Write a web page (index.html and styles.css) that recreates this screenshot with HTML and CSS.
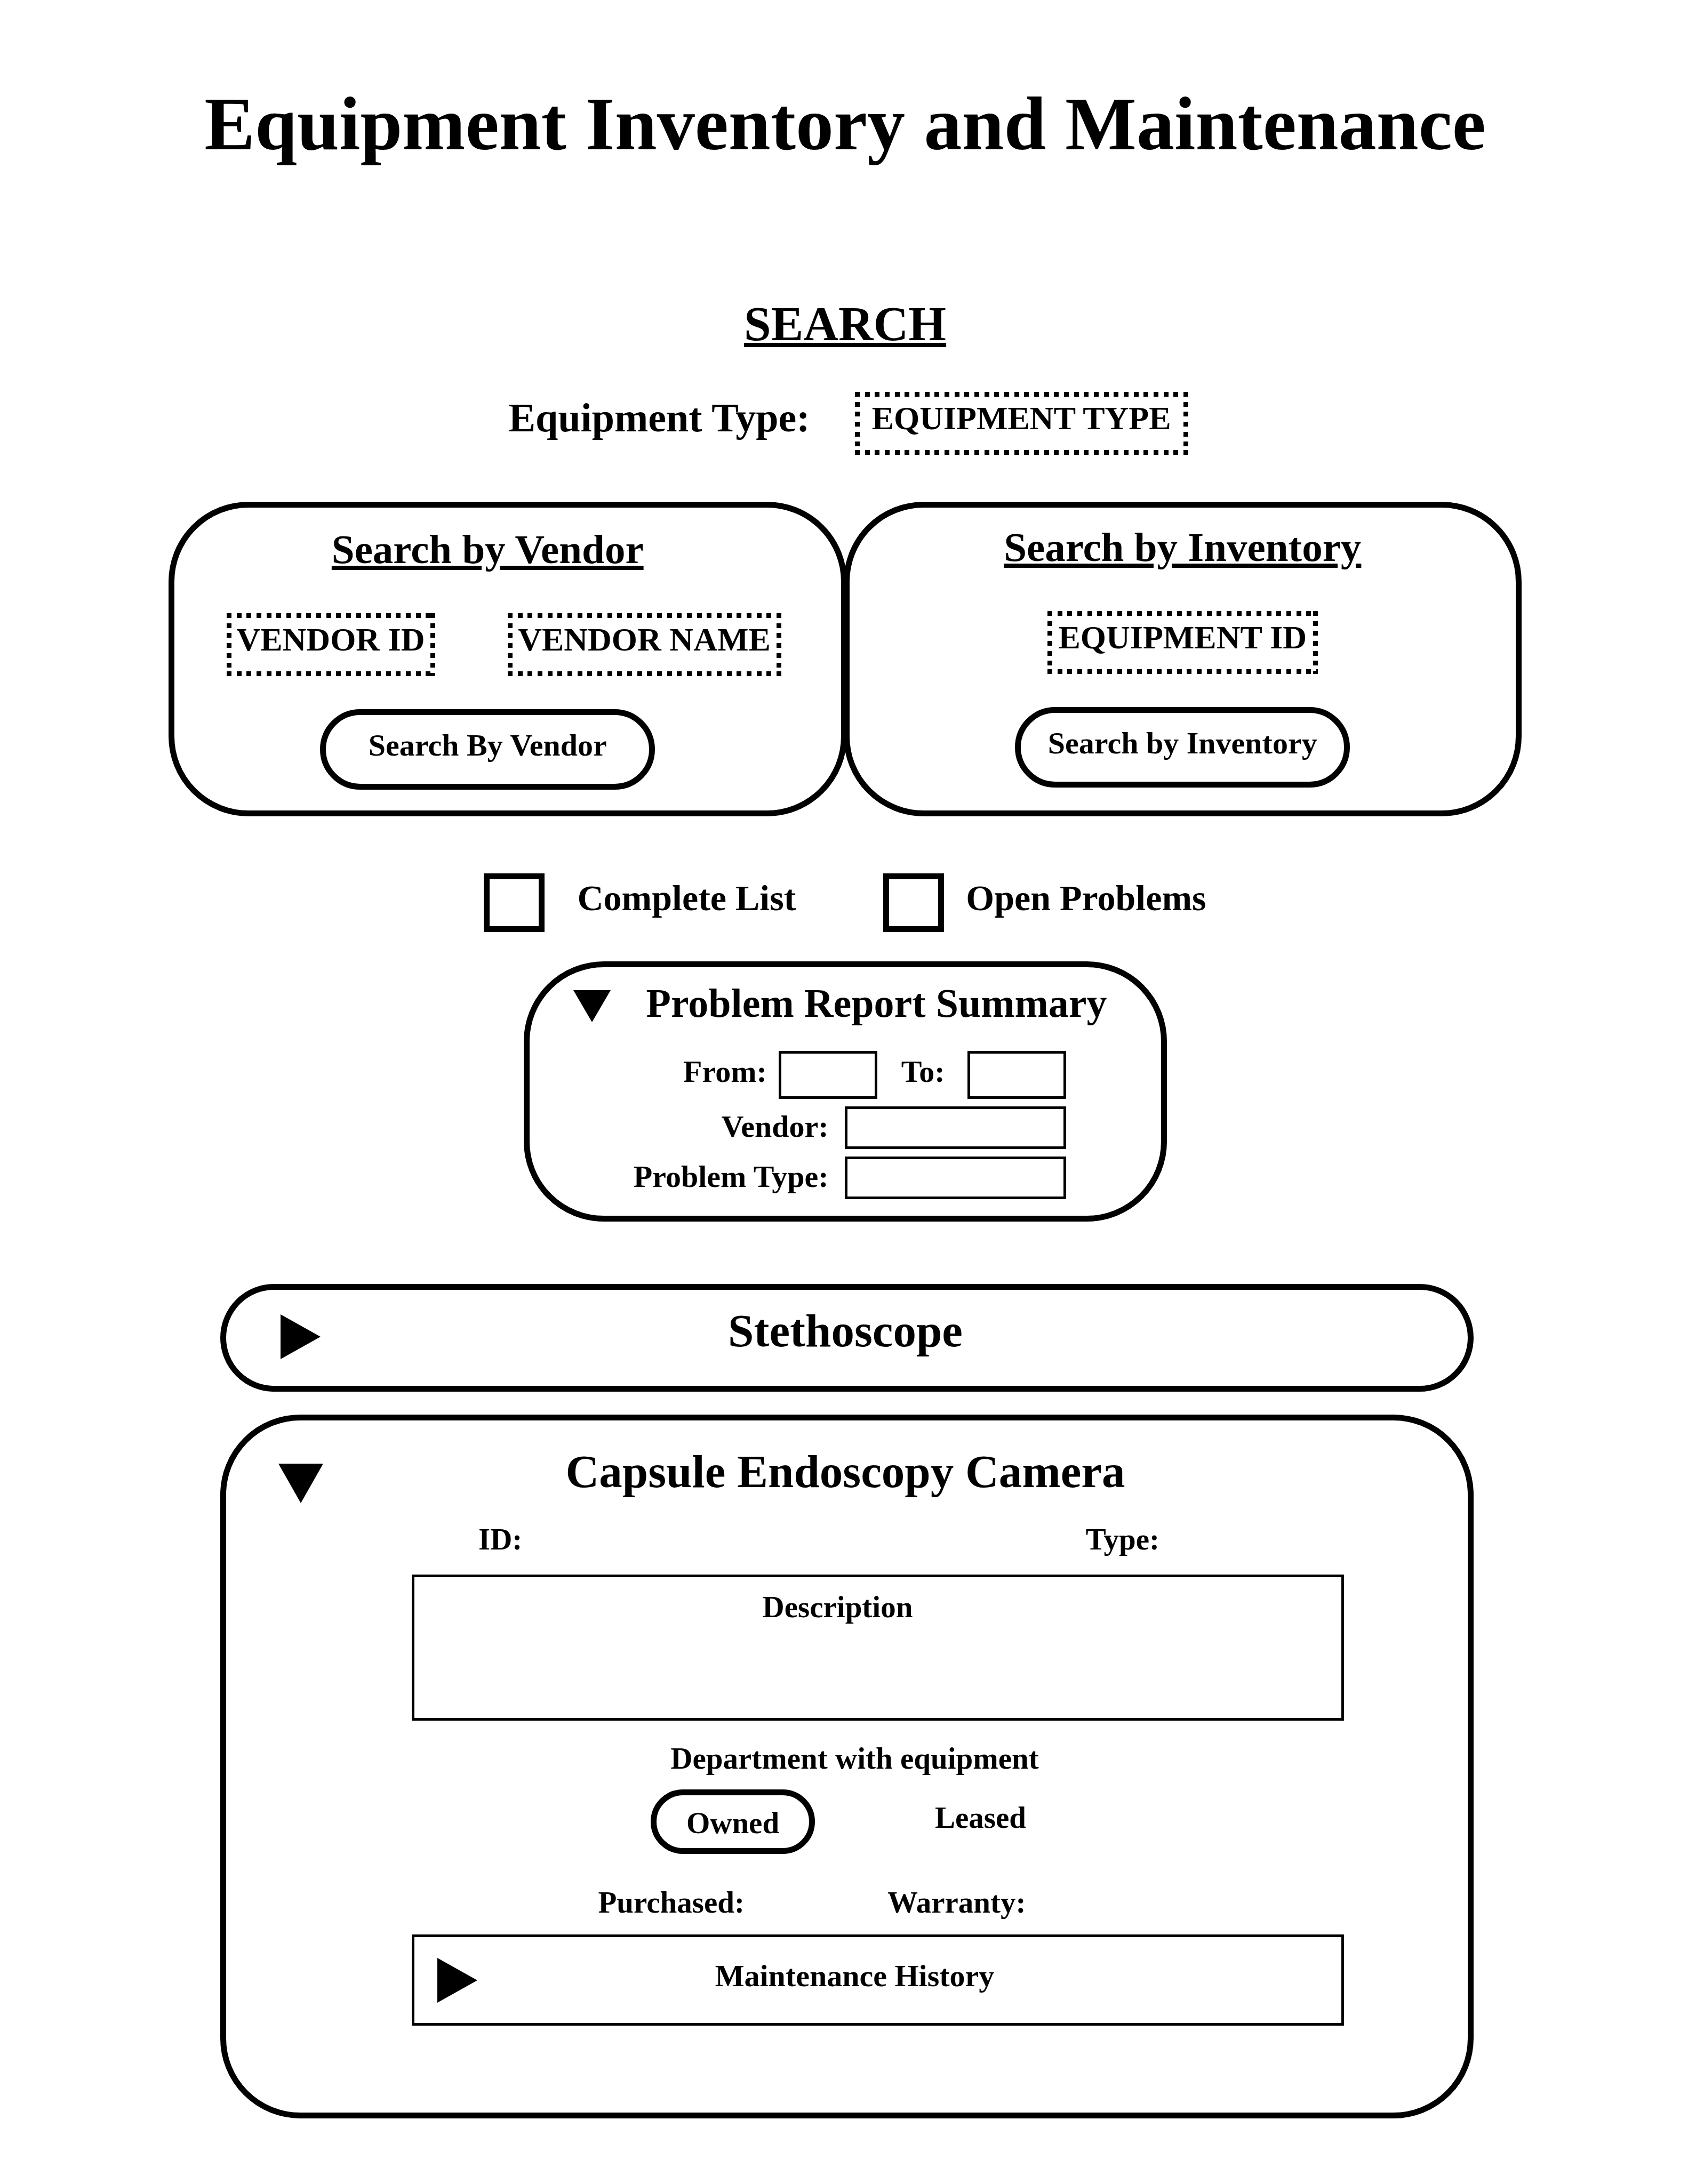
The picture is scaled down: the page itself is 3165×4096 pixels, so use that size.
FILE: index.html
```html
<!DOCTYPE html>
<html lang="en">
<head>
<meta charset="utf-8">
<meta name="viewport" content="width=device-width, initial-scale=1">
<title>Equipment Inventory and Maintenance</title>
<link rel="stylesheet" href="styles.css">
</head>
<body>
<main class="page">
  <h1 class="page-title">Equipment Inventory and Maintenance</h1>

  <h2 class="search-title">SEARCH</h2>
  <div class="type-row">
    <label class="type-label" for="equipment-type">Equipment Type:</label>
    <input class="dotted-field field-type" id="equipment-type" type="text" placeholder="EQUIPMENT TYPE">
  </div>

  <div class="search-cards">
    <form class="card card-vendor">
      <h3 class="card-title">Search by Vendor</h3>
      <div class="card-fields">
        <input class="dotted-field field-vendor-id" type="text" placeholder="VENDOR ID" aria-label="Vendor ID">
        <input class="dotted-field field-vendor-name" type="text" placeholder="VENDOR NAME" aria-label="Vendor name">
      </div>
      <button class="pill" type="button">Search By Vendor</button>
    </form>
    <form class="card card-inventory">
      <h3 class="card-title">Search by Inventory</h3>
      <div class="card-fields">
        <input class="dotted-field field-equipment-id" type="text" placeholder="EQUIPMENT ID" aria-label="Equipment ID">
      </div>
      <button class="pill" type="button">Search by Inventory</button>
    </form>
  </div>

  <div class="filters">
    <div class="filter filter-list">
      <input class="check" id="complete-list" type="checkbox">
      <label class="check-label" for="complete-list">Complete List</label>
    </div>
    <div class="filter filter-open">
      <input class="check" id="open-problems" type="checkbox">
      <label class="check-label" for="open-problems">Open Problems</label>
    </div>
  </div>

  <section class="summary">
    <div class="summary-head">
      <button class="toggle toggle-small" type="button" aria-label="Collapse problem report summary">
        <svg class="arrow-small" viewBox="0 0 70 60"><polygon points="0,0 70,0 35,60"/></svg>
      </button>
      <h3 class="summary-title">Problem Report Summary</h3>
    </div>
    <div class="summary-fields">
      <div class="summary-row row-dates">
        <label class="summary-label" for="from">From:</label>
        <input class="box box-date" id="from" type="text">
        <label class="summary-label label-to" for="to">To:</label>
        <input class="box box-date box-to" id="to" type="text">
      </div>
      <div class="summary-row">
        <label class="summary-label" for="vendor">Vendor:</label>
        <input class="box box-wide" id="vendor" type="text">
      </div>
      <div class="summary-row">
        <label class="summary-label" for="problem-type">Problem Type:</label>
        <input class="box box-wide" id="problem-type" type="text">
      </div>
    </div>
  </section>

  <div class="results">
    <section class="result result-closed">
      <div class="result-head">
        <button class="toggle" type="button" aria-label="Expand Stethoscope">
          <svg class="arrow" viewBox="0 0 84 84"><polygon points="4,0 79,42 4,84"/></svg>
        </button>
        <h2 class="result-title">Stethoscope</h2>
      </div>
    </section>

    <section class="result result-open">
      <div class="result-head">
        <button class="toggle" type="button" aria-label="Collapse Capsule Endoscopy Camera">
          <svg class="arrow" viewBox="0 0 84 84"><polygon points="0,5 84,5 42,79"/></svg>
        </button>
        <h2 class="result-title">Capsule Endoscopy Camera</h2>
      </div>
      <div class="details">
        <div class="text id-row"><span>ID:</span><span>Type:</span></div>
        <textarea class="description" placeholder="Description" aria-label="Description"></textarea>
        <p class="text department">Department with equipment</p>
        <div class="ownership">
          <button class="text owner owner-active" type="button" aria-pressed="true">Owned</button>
          <button class="text owner" type="button" aria-pressed="false">Leased</button>
        </div>
        <div class="text dates"><span>Purchased:</span><span>Warranty:</span></div>
        <button class="history" type="button">
          <svg class="arrow" viewBox="0 0 84 84"><polygon points="4,0 79,42 4,84"/></svg>
          <span class="history-label">Maintenance History</span>
        </button>
      </div>
    </section>
  </div>
</main>
</body>
</html>
```
FILE: styles.css
```css
*,
*::before,
*::after {
  box-sizing: border-box;
}

body {
  margin: 0;
  background: #fff;
  color: #000;
  font-family: "Liberation Serif", "Times New Roman", serif;
  font-weight: 700;
}

h1, h2, h3, p, form {
  margin: 0;
}

button, input, textarea {
  margin: 0;
  padding: 0;
  border: 0;
  border-radius: 0;
  background: transparent;
  color: inherit;
  font: inherit;
}

button {
  cursor: pointer;
}

::placeholder {
  color: #000;
  opacity: 1;
}

.page {
  padding: 152px 312px 100px 316px;
}

.text {
  font-size: 57px;
  line-height: 66px;
}

/* Headings */

.page-title {
  font-size: 142px;
  line-height: 160px;
  text-align: center;
  white-space: nowrap;
}

.search-title {
  margin-top: 246px;
  font-size: 91px;
  line-height: 100px;
  text-align: center;
}

.search-title,
.card-title {
  text-decoration: underline;
  text-decoration-thickness: 8px;
  text-underline-offset: 5px;
}

/* Equipment type */

.type-row {
  display: flex;
  align-items: center;
  justify-content: center;
  gap: 84px;
  margin-top: 77px;
  padding-left: 12px;
}

.type-label {
  padding-bottom: 22px;
  font-size: 76px;
  line-height: 90px;
}

/* Each tile carries three square dots, 56px long in all */
.dotted-field {
  --dots: #000 0 9px, transparent 9px 19px, #000 19px 28px, transparent 28px 37px, #000 37px 46px, transparent 46px;
  height: 118px;
  padding-bottom: 20px;
  background:
    linear-gradient(90deg, var(--dots)) left top / 56px 9px repeat-x,
    linear-gradient(90deg, var(--dots)) left bottom / 56px 9px repeat-x,
    linear-gradient(180deg, var(--dots)) left top / 9px 56px repeat-y,
    linear-gradient(180deg, var(--dots)) right top / 9px 56px repeat-y;
  font-size: 62px;
  text-align: center;
}

.field-type {
  width: 625px;
}

.field-vendor-id {
  width: 391px;
}

.field-vendor-name {
  width: 513px;
}

.field-equipment-id {
  width: 507px;
}

/* Search cards */

.search-cards {
  display: grid;
  grid-template-columns: 1fr 1fr;
  margin-top: 88px;
}

.card {
  display: flex;
  flex-direction: column;
  align-items: center;
  border: 11px solid #000;
  border-radius: 150px;
}

.card-vendor {
  margin-right: -3px;
  padding: 33px 112px 39px 37px;
}

.card-inventory {
  margin-left: -3px;
  padding: 29px 37px 43px;
}

.card-title {
  font-size: 77px;
  line-height: 90px;
}

.card-fields {
  display: flex;
  justify-content: center;
  align-self: stretch;
  gap: 136px;
  margin: 75px 0 62px;
}

.card-vendor .card-fields {
  justify-content: flex-end;
}

.pill {
  width: 628px;
  height: 151px;
  padding-bottom: 17px;
  border: 11px solid #000;
  border-radius: 76px;
  font-size: 58px;
}

/* Filters */

.filters {
  display: flex;
  justify-content: center;
  gap: 164px;
  margin-top: 107px;
}

.filter {
  display: flex;
  align-items: center;
}

.filter-list {
  gap: 61px;
}

.filter-open {
  gap: 41px;
}

.check {
  appearance: none;
  width: 114px;
  height: 110px;
  border: 11px solid #000;
}

.check:checked {
  background: #000;
  background-clip: content-box;
  padding: 16px;
}

.check-label {
  padding-bottom: 18px;
  font-size: 68px;
  line-height: 80px;
}

/* Problem report summary */

.summary {
  width: 1206px;
  max-width: 100%;
  margin: 55px auto 0;
  padding: 22px 0 31px;
  border: 11px solid #000;
  border-radius: 150px;
}

.summary-head {
  display: flex;
  align-items: flex-start;
  gap: 67px;
  padding-left: 82px;
}

.summary-title {
  font-size: 76px;
  line-height: 90px;
  white-space: nowrap;
}

.toggle {
  flex: none;
}

.toggle-small {
  margin-top: 21px;
}

.arrow,
.arrow-small {
  display: block;
  flex: none;
  fill: #000;
}

.arrow {
  width: 84px;
  height: 84px;
}

.arrow-small {
  width: 70px;
  height: 60px;
}

.summary-fields {
  display: flex;
  flex-direction: column;
  gap: 14px;
  margin-top: 45px;
  padding-right: 178px;
}

.summary-row {
  display: flex;
  align-items: center;
  justify-content: flex-end;
  gap: 30px;
}

.row-dates {
  gap: 22px;
}

.summary-label {
  padding-bottom: 4px;
  font-size: 58px;
  line-height: 66px;
}

.row-dates .summary-label {
  padding-bottom: 12px;
}

.label-to {
  margin-left: 23px;
}

.box {
  border: 5px solid #000;
}

.box-date {
  width: 185px;
  height: 90px;
}

.box-to {
  margin-left: 20px;
}

.box-wide {
  width: 415px;
  height: 80px;
}

/* Results */

.results {
  display: flex;
  flex-direction: column;
  gap: 43px;
  margin: 117px 90px 0 97px;
}

.result {
  border: 11px solid #000;
}

.result-closed {
  padding: 27px 0 53px;
  border-radius: 101px;
}

.result-open {
  padding: 46px 0 163px;
  border-radius: 150px;
}

.result-head {
  display: flex;
  align-items: flex-start;
  padding: 0 188px 0 98px;
}

.result-closed .toggle {
  margin: 19px 0 -3px;
}

.result-open .toggle {
  margin: 30px 0 -14px;
}

.result-title {
  flex: 1;
  font-size: 87px;
  line-height: 100px;
  text-align: center;
}

.details {
  display: flex;
  flex-direction: column;
  padding: 44px 232px 0 348px;
}

.id-row {
  display: flex;
  justify-content: space-between;
  padding: 0 346px 0 125px;
}

.description {
  height: 274px;
  margin-top: 33px;
  padding: 23px 151px 0 0;
  border: 5px solid #000;
  font-size: 57px;
  line-height: 66px;
  text-align: center;
  resize: none;
}

.department {
  margin-top: 38px;
  padding-right: 87px;
  text-align: center;
}

.ownership {
  display: flex;
  align-items: center;
  justify-content: center;
  gap: 225px;
  margin-top: 25px;
  padding-right: 148px;
}

.owner {
  padding-bottom: 16px;
}

.owner-active {
  width: 308px;
  height: 121px;
  padding: 4px 0 0;
  border: 11px solid #000;
  border-radius: 61px;
}

.dates {
  display: flex;
  justify-content: center;
  gap: 268px;
  margin-top: 58px;
  padding-right: 247px;
}

.history {
  display: flex;
  align-items: center;
  height: 171px;
  margin-top: 27px;
  padding: 0 210px 0 39px;
  border: 5px solid #000;
}

.history-label {
  flex: 1;
  padding-bottom: 15px;
  font-size: 58px;
  line-height: 66px;
  text-align: center;
}
```
